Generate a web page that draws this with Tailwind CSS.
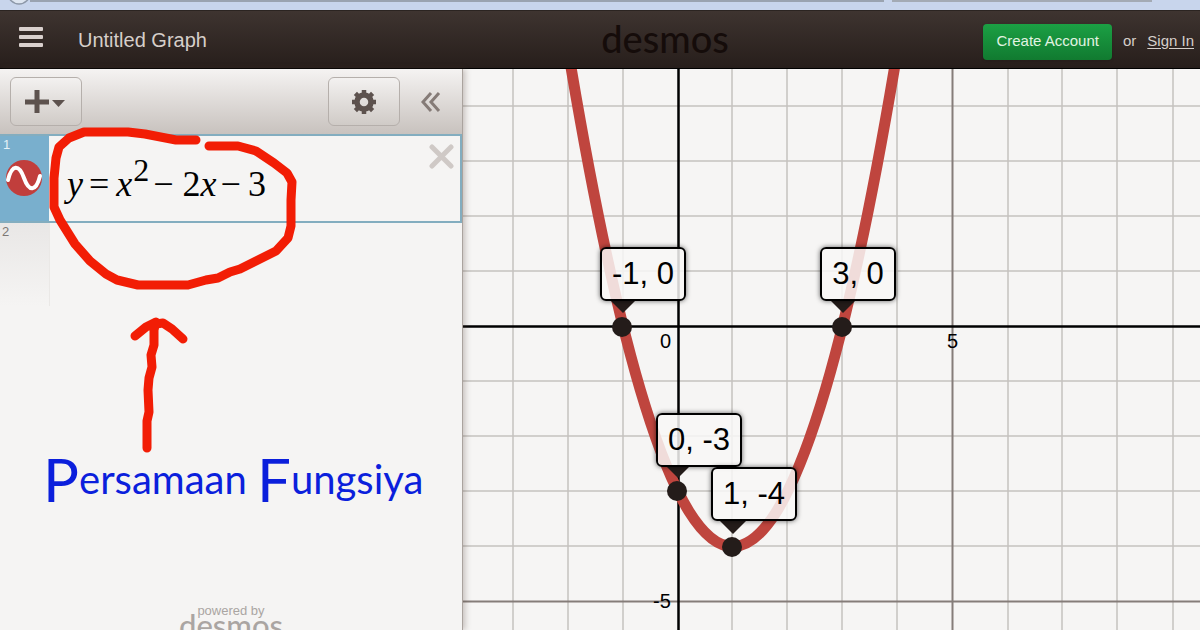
<!DOCTYPE html>
<html lang="en">

<head>
    <meta charset="UTF-8">
    <meta name="viewport" content="width=device-width, initial-scale=1.0">
    <title>Untitled Graph</title>
    <script src="https://cdn.jsdelivr.net/npm/@tailwindcss/browser@4"></script>
</head>

<body class="relative flex h-screen flex-col overflow-hidden bg-[#f5f4f3] font-['Liberation_Sans',sans-serif]">
    <!-- Browser edge -->
    <div class="flex h-[10px] shrink-0 items-start gap-2 bg-[#c8d5ec] pr-12">
        <svg class="h-[6px] w-[860px] flex-auto" aria-hidden="true">
            <circle cx="19" cy="-7" r="11" fill="#dde5f0" stroke="#8d98a8" stroke-width="1.5" />
            <path d="M30 1H3000" stroke="#9aa3b0" stroke-width="2" />
        </svg>
        <div class="h-[2px] w-[260px] shrink-0 bg-[#a3aab4]"></div>
    </div>

    <!-- Header -->
    <header class="relative flex h-[59px] shrink-0 items-center border-y border-t-[#2b2421] border-b-black bg-linear-to-b from-[#3e3430] to-[#271e1b] pr-[6px] pl-[19px] text-[#d6cfca]">
        <button class="pb-1" aria-label="Menu">
            <svg width="24" height="22" viewBox="0 0 24 22" fill="#d9d0cd">
                <rect x="0" y="0" width="24" height="4" rx="1" />
                <rect x="0" y="8" width="24" height="4" rx="1" />
                <rect x="0" y="16" width="24" height="4" rx="1" />
            </svg>
        </button>
        <h1 class="ml-[35px] text-[20px]">Untitled Graph</h1>
        <div class="absolute inset-x-0 top-1 pl-[130px] text-center font-['Lato',sans-serif] text-[38px] leading-[46px] font-medium text-[#150c0a]">desmos</div>
        <div class="relative ml-auto flex items-center pt-1 text-[15px]">
            <button class="h-9 rounded bg-linear-to-b from-[#1ba044] to-[#117a30] px-[13px] text-[#e2f3e2] shadow">Create Account</button>
            <span class="ml-[11px]">or</span>
            <a href="#" class="ml-[11px] underline underline-offset-2">Sign In</a>
        </div>
    </header>

    <main class="flex min-h-0 flex-1">
        <!-- Expressions -->
        <section class="z-10 flex w-[463px] shrink-0 flex-col border-r border-[#aaa39e] bg-[#f5f4f3] shadow-[2px_0_6px_rgba(80,60,50,0.3)]">
            <div class="flex h-[65px] shrink-0 items-center bg-linear-to-b from-[#f5f3f2] to-[#c8c2be] pr-[20px] pl-[10px] text-[#5d524e]">
                <button class="flex h-[49px] w-[72px] items-center justify-center gap-[3px] rounded-md border border-[#b5afab] bg-linear-to-b from-[#f3f1f0] to-[#d0cbc7] pr-[3px]" aria-label="Add item">
                    <svg width="24" height="24" viewBox="0 0 24 24" stroke="currentColor" stroke-width="5">
                        <path d="M12 0V23M0 12H24" />
                    </svg>
                    <svg width="13" height="7" viewBox="0 0 13 7" class="mt-1" fill="currentColor">
                        <path d="M0 0H13L6.500 7Z" />
                    </svg>
                </button>
                <button class="ml-auto flex h-[49px] w-[72px] items-center justify-center rounded-md border border-[#b5afab] bg-linear-to-b from-[#f3f1f0] to-[#d0cbc7]" aria-label="Settings">
                    <svg width="26" height="26" viewBox="-13 -13 26 26">
                        <circle r="7" fill="none" stroke="currentColor" stroke-width="5.500" />
                        <path d="M0 -12V-8M0 12V8M-12 0H-8M12 0H8M-8.600 -8.600L-6 -6M8.600 8.600L6 6M-8.600 8.600L-6 6M8.600 -8.600L6 -6" stroke="currentColor" stroke-width="4.500" />
                    </svg>
                </button>
                <button class="ml-[21px]" aria-label="Hide list">
                    <svg width="21" height="22" viewBox="0 0 21 22" fill="none" stroke="#857b77" stroke-width="3">
                        <path d="M10 2L2 11L10 20M18 2L10 11L18 20" />
                    </svg>
                </button>
            </div>

            <ol class="shrink-0">
                <li class="flex h-[89px] border-2 border-l-0 border-[#83adbf]">
                    <div class="w-[49px] shrink-0 bg-[#79afcd] pt-[2px]">
                        <span class="block pl-[3px] text-[13px] leading-[14px] text-[#e6f2f8]">1</span>
                        <svg class="ml-[5px] mt-[7px]" width="38" height="38" viewBox="0 0 38 38">
                            <circle cx="19" cy="19" r="18" fill="#c13e3c" />
                            <path d="M3 21C7 5 14 5 19 19S31 33 35 17" fill="none" stroke="#fff" stroke-width="4" stroke-linecap="round" />
                        </svg>
                    </div>
                    <div class="flex flex-1 items-baseline pt-[26px] pl-[18px] font-['Liberation_Serif',serif] text-[36px] leading-[44px] text-black">
                        <i>y</i><span class="ml-[6px]">=</span><i class="ml-[7px]">x</i><sup class="-top-[15px] ml-px text-[32px] leading-none">2</sup>
                        <span class="ml-[4px]">−</span><span class="ml-[9px]">2</span><i>x</i><span class="ml-[4px]">−</span><span class="ml-[7px]">3</span>
                    </div>
                    <button class="mt-[8px] mr-[6px] self-start" aria-label="Delete">
                        <svg width="25" height="25" viewBox="0 0 25 25" stroke="#cfc9c6" stroke-width="5" stroke-linecap="round">
                            <path d="M3 3L22 22M22 3L3 22" />
                        </svg>
                    </button>
                </li>
                <li class="h-[83px] w-[50px] border-r border-[#eae8e6] bg-linear-to-b from-[#e9e7e6] to-[#f5f4f3] pl-[2px] text-[13px] leading-[17px] text-[#7d7774]">2</li>
            </ol>

            <p class="mt-[133px] ml-[43px] text-[40px] leading-[80px] whitespace-nowrap text-[#0b1fdc] font-['Tempus_Sans_ITC','Papyrus','Lato',sans-serif]"><span class="align-[-8px] text-[60px]">P</span>ersamaan <span class="align-[-8px] text-[60px]">F</span>ungsiya</p>

            <div class="mt-auto h-[27px] shrink-0 text-center text-[#aaa5a2]">
                <div class="text-[13px] leading-[16px]">powered by</div>
                <div class="-mt-[12px] font-['Lato',sans-serif] text-[31px] leading-[36px] font-medium">desmos</div>
            </div>
        </section>

        <!-- Graph -->
        <section class="relative min-w-0 flex-1 overflow-hidden bg-[#f6f5f4]">
            <svg class="block h-full w-full" fill="none">
                <g stroke="#c5c2bf" stroke-width="1.500">
                    <path d="M50 0V2000M105 0V2000M160 0V2000M269 0V2000M324 0V2000M379 0V2000M434 0V2000M545 0V2000M599 0V2000M654 0V2000M710 0V2000" />
                    <path d="M0 37H4000M0 92H4000M0 147H4000M0 202H4000M0 312H4000M0 367H4000M0 422H4000M0 477H4000" />
                </g>
                <path d="M489.500 0V2000M0 532.500H4000" stroke="#857d79" stroke-width="2" />
                <path d="M215.500 0V2000M0 257.500H4000" stroke="#000" stroke-width="2.500" />
                <path d="M94.400 -85.700Q269.800 1040.700 445.200 -85.700" stroke="#bf453e" stroke-width="11" />
                <g fill="#241c1a">
                    <circle cx="159" cy="258" r="10" />
                    <circle cx="379" cy="258" r="10" />
                    <circle cx="214" cy="422" r="10" />
                    <circle cx="269" cy="478" r="10" />
                    <path d="M147 231H173L160 244Z" />
                    <path d="M367 231H393L380 244Z" />
                    <path d="M202 396H228L215 409Z" />
                    <path d="M257 452H283L270 465Z" />
                </g>
                <g fill="#000" class="text-[20px]">
                    <text x="197" y="279">0</text>
                    <text x="484" y="279">5</text>
                    <text x="190" y="539">-5</text>
                </g>
            </svg>
            <div class="absolute top-[178px] left-[137px] flex h-[54px] w-[86px] items-center justify-center rounded-md border-2 border-black bg-[#f8f7f6]/85 text-[31px] shadow-[0_0_5px_rgba(0,0,0,0.6)]">-1, 0</div>
            <div class="absolute top-[178px] left-[357px] flex h-[54px] w-[76px] items-center justify-center rounded-md border-2 border-black bg-[#f8f7f6]/85 text-[31px] shadow-[0_0_5px_rgba(0,0,0,0.6)]">3, 0</div>
            <div class="absolute top-[344px] left-[193px] flex h-[54px] w-[86px] items-center justify-center rounded-md border-2 border-black bg-[#f8f7f6]/85 text-[31px] shadow-[0_0_5px_rgba(0,0,0,0.6)]">0, -3</div>
            <div class="absolute top-[398px] left-[248px] flex h-[54px] w-[86px] items-center justify-center rounded-md border-2 border-black bg-[#f8f7f6]/85 text-[31px] shadow-[0_0_5px_rgba(0,0,0,0.6)]">1, -4</div>
        </section>
    </main>

    <!-- Hand drawn marks over the expression list -->
    <svg class="pointer-events-none absolute top-0 left-0 z-20" width="463" height="470" fill="none" stroke="#f21d05" stroke-width="9" stroke-linecap="round" stroke-linejoin="round">
        <path d="M196 140H176L145 134L128 132H84L69 138L59 147L56 158L54 178V207L60 220L75 244L90 261L106 274L117 280L138 285H188L206 280L218 278L230 272L240 269L258 260L276 251L288 238L291 226V200L292 182L287 173L274 163L256 151L238 146H209" />
        <path d="M147 448V421L149 412L148 390L149 378L152 367L151 355L154 345V330L156 322L146 327L135 336M156 324L163 323L172 329L183 339" />
    </svg>
</body>

</html>
